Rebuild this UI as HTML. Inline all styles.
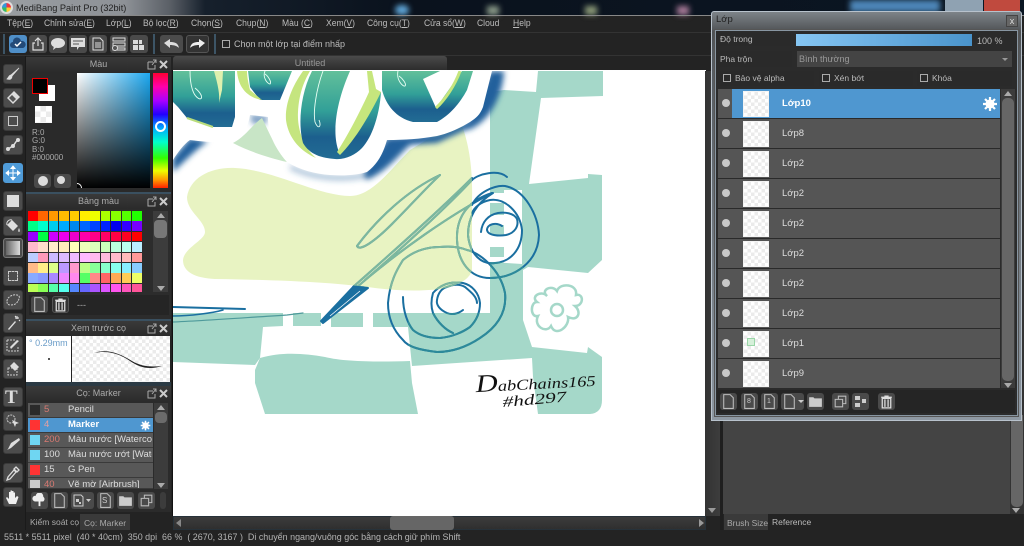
<!DOCTYPE html>
<html><head><meta charset="utf-8"><title>MediBang Paint Pro</title>
<style>
*{box-sizing:border-box}
html,body{margin:0;padding:0;width:1024px;height:546px;overflow:hidden;background:#222}
#r{position:relative;width:1024px;height:546px;overflow:hidden;background:#232323;font-family:"Liberation Sans","DejaVu Sans","Noto Sans CJK SC",sans-serif;font-size:9px;color:#c4c4c4;filter:blur(.35px)}
#r div,#r span.a,#r svg.a{position:absolute}
.t{white-space:nowrap;line-height:12px}
.m{top:18px;font-size:9.5px;color:#bdbdbd;white-space:nowrap;line-height:12px;position:absolute;transform:scaleX(.9);transform-origin:0 0}
.b{background:#4a4a4a;border-radius:3px}
.h{background:linear-gradient(#3a3a3a,#2b2b2b);height:15px;text-align:center;line-height:15px;color:#aaa;font-size:9px}
.tb{width:20px;height:20px;left:3px;background:#4c4c4c;border-radius:3px;border:1px solid #3a3a3a}
.ck{background-color:#fff;background-image:conic-gradient(#ebebeb 25%,#fff 25% 50%,#ebebeb 50% 75%,#fff 75%);background-size:7px 7px}
.lr{left:718px;width:282px;height:29px;background:#555}
.lr b{position:absolute;left:64px;top:9px;font-weight:normal;font-size:9.5px;color:#ddd;line-height:12px}
.ey{position:absolute;left:4px;top:10px;width:8px;height:8px;border-radius:50%;background:#c8c8c8}
.th{position:absolute;left:25px;top:2px;width:26px;height:26px;border:1px solid #f4f4f4}
.br{left:28px;width:125px;height:15px;background:#585858;border-bottom:1px solid #3a3a3a}
.br s{position:absolute;left:2px;top:2px;width:10px;height:10px;text-decoration:none}
.br i{position:absolute;left:16px;top:1px;font-style:normal;font-size:9.5px;color:#d97a72;line-height:12px}
.br b{position:absolute;left:40px;top:1px;font-weight:normal;font-size:9.5px;color:#ddd;line-height:12px;white-space:nowrap;overflow:hidden;width:84px}
.pal{left:28px;top:211px;width:116px;height:81px;display:flex;flex-wrap:wrap;align-content:flex-start;overflow:hidden}
.pal i{display:block;width:9.6px;height:9.6px;margin:0 .8px .8px 0}
.lab{background:#2a2a2a;color:#bbb;font-size:8.5px;line-height:13px;padding-left:0;white-space:nowrap}
.cb{position:absolute;width:8px;height:8px;border:1px solid #aaa;left:3px;top:3px}
</style></head><body><div id="r">
<svg width="0" height="0" style="position:absolute"><defs>
<symbol id="doc" viewBox="0 0 16 16"><path d="M3.500 1.500h6l3 3v10h-9z" fill="none" stroke="#bbb" stroke-width="1"/></symbol>
<symbol id="fold" viewBox="0 0 16 16"><path d="M2 4h4l1 1h7v8H2z" fill="#ccc"/></symbol>
<symbol id="copy" viewBox="0 0 16 16"><path d="M3 6h7v7H3zM6 6V3h7v7h-3" fill="none" stroke="#bbb"/></symbol>
<symbol id="tr" viewBox="0 0 16 16"><path d="M3 4h10M6 3h4M4 5h8v9H4zM6.500 6v7M9.500 6v7" fill="none" stroke="#ddd" stroke-width="1.200"/></symbol>
<symbol id="gear" viewBox="0 0 16 16"><circle cx="8" cy="8" r="4.500" fill="#fff"/><circle cx="8" cy="8" r="1.800" fill="#4f97d0"/><path d="M8 1v14M1 8h14M3 3l10 10M13 3L3 13" stroke="#fff" stroke-width="2.200"/></symbol>
<linearGradient id="lf" x1="0" y1="0" x2="0" y2="1"><stop offset="0" stop-color="#62c09a"/><stop offset=".45" stop-color="#32a098"/><stop offset=".75" stop-color="#1c5f8e"/><stop offset="1" stop-color="#226c94"/></linearGradient>
<filter id="bl" x="-40%" y="-40%" width="180%" height="180%"><feGaussianBlur stdDeviation="3"/></filter>
<clipPath id="cb"><path d="M187 197C190 178 210 167 235 168C275 170 315 195 350 196C372 196 390 170 410 150L460 120C468 140 473 165 472 200L472 270C470 278 462 283 450 287C430 292 400 291 375 288C340 283 290 280 215 279C195 278 183 272 183 260C184 248 205 240 205 232C205 220 187 212 187 197Z"/></clipPath>
<clipPath id="cm"><rect x="408" y="313" width="120" height="50"/><rect x="490" y="262" width="33" height="51"/></clipPath>
<g id="sc" fill="none" stroke-linecap="round" stroke-linejoin="round" stroke-width="2">
<path d="M440 175C408 190 378 218 357 246C360 252 376 240 392 224C410 206 426 188 440 175Z"/>
<path d="M472 178C440 210 395 250 353 287M472 180C448 206 400 250 365 280M492 193C450 215 400 250 357 287"/>
<path d="M354 286L368 288L323 323L321 321Z" fill="currentColor"/>
<path d="M472 180C478 174 498 169 507 177"/>
<path d="M472 205C478 192 495 185 505 186C525 190 538 215 539 235C538 262 515 278 490 278C470 278 458 262 457 240C456 215 470 200 492 193"/>
<path d="M493 193C478 202 468 215 468 235C470 255 482 265 495 263C510 262 522 250 522 230C520 212 505 198 490 200C480 202 474 208 472 213"/>
<path d="M502 226C496 222 487 224 487 230C488 236 500 236 506 235C515 233 519 226 517 219C514 213 505 212 498 213C488 215 482 222 481 232"/>
<path d="M467 250C478 252 500 268 505 293C507 312 497 327 480 338C465 348 450 352 437 352C420 350 408 347 403 340C393 330 388 318 388 303C390 280 398 268 403 260C415 250 428 247 440 247C450 246 460 247 467 250"/>
<path d="M403 297C403 312 408 324 413 330C420 336 430 338 440 338C452 337 463 332 470 327C477 320 480 312 480 303C479 293 472 285 463 283C450 281 440 285 433 293C431 300 431 307 433 313C438 323 446 330 453 333"/>
<path d="M463 310C458 314 452 315 447 313C440 310 436 305 437 300C438 293 442 288 447 287C454 284 460 284 465 287C471 292 477 297 477 303"/>
</g>
</defs></svg>

<!-- title bar -->
<div style="left:0;top:0;width:1024px;height:16px;background:linear-gradient(90deg,#9a9ea2 0,#8d9196 125px,#5a5f66 170px,#16202c 205px,#0a121d 400px,#0b1420 700px,#0a1622 1024px)"></div>
<div style="left:395px;top:5px;width:14px;height:10px;background:#5fa6d8;border-radius:5px;filter:blur(3px)"></div>
<div style="left:487px;top:6px;width:12px;height:9px;background:#8a9a88;filter:blur(3px)"></div>
<div style="left:585px;top:6px;width:12px;height:9px;background:#8c9a78;filter:blur(3px)"></div>
<div style="left:677px;top:6px;width:12px;height:9px;background:#a87a98;filter:blur(3px)"></div>
<div style="left:850px;top:0;width:90px;height:12px;background:#4d86b8;filter:blur(3px)"></div>
<div style="left:945px;top:0;width:38px;height:12px;background:#8fa2b2"></div>
<div style="left:984px;top:0;width:36px;height:12px;background:#c04a3e"></div>
<div style="left:0;top:1px;width:13px;height:13px;background:conic-gradient(#e34 0 25%,#fc3 0 50%,#3b6 0 75%,#39d 0);border-radius:50%;border:2px solid #ddd"></div>
<div class="t" style="left:16px;top:2px;font-size:9.2px;color:#222">MediBang Paint Pro (32bit)</div>
<div style="left:0;top:15px;width:1024px;height:1px;background:#888"></div>

<!-- menu -->
<span class="m" style="left:7px">Tệp(<u>E</u>)</span>
<span class="m" style="left:44px">Chỉnh sửa(<u>E</u>)</span>
<span class="m" style="left:106px">Lớp(<u>L</u>)</span>
<span class="m" style="left:143px">Bộ lọc(<u>R</u>)</span>
<span class="m" style="left:191px">Chọn(<u>S</u>)</span>
<span class="m" style="left:236px">Chụp(<u>N</u>)</span>
<span class="m" style="left:282px">Màu (<u>C</u>)</span>
<span class="m" style="left:326px">Xem(<u>V</u>)</span>
<span class="m" style="left:367px">Công cụ(<u>T</u>)</span>
<span class="m" style="left:424px">Cửa sổ(<u>W</u>)</span>
<span class="m" style="left:477px">Cloud</span>
<span class="m" style="left:513px"><u>H</u>elp</span>
<div style="left:0;top:32px;width:1024px;height:1px;background:#333"></div>

<!-- toolbar -->
<div style="left:3px;top:34px;width:2px;height:20px;background:#3d5566"></div>
<div class="b" style="left:9px;top:35px;width:18px;height:18px;background:#4f8fc8"></div>
<svg class="a" style="left:10px;top:37px" width="16" height="14" viewBox="0 0 16 14"><path d="M3 11a3 3 0 0 1 0-6 4 4 0 0 1 8-1 3.500 3.500 0 0 1 2 7z" fill="#234a78"/><path d="M5 7l2 2 4-4" stroke="#fff" fill="none" stroke-width="1.500"/></svg>
<div class="b" style="left:29px;top:35px;width:18px;height:18px"></div>
<svg class="a" style="left:30px;top:36px" width="16" height="16" viewBox="0 0 16 16"><path d="M5 7H3v7h10V7h-2M8 10V2M5 5l3-3 3 3" fill="none" stroke="#ddd" stroke-width="1.200"/></svg>
<div class="b" style="left:49px;top:35px;width:18px;height:18px"></div>
<svg class="a" style="left:50px;top:37px" width="16" height="14" viewBox="0 0 16 14"><ellipse cx="8" cy="6" rx="7" ry="5" fill="#ddd"/><path d="M4 9l-1 4 4-3z" fill="#ddd"/></svg>
<div class="b" style="left:69px;top:35px;width:18px;height:18px"></div>
<svg class="a" style="left:70px;top:37px" width="16" height="14" viewBox="0 0 16 14"><path d="M1 1h14v9H9l-2 3v-3H1z" fill="#ddd"/><path d="M3 4h10M3 7h6" stroke="#555"/></svg>
<div class="b" style="left:89px;top:35px;width:18px;height:18px"></div>
<svg class="a" style="left:90px;top:36px" width="16" height="16" viewBox="0 0 16 16"><path d="M3 2h7l3 3v9H3z" fill="none" stroke="#ddd"/><path d="M5 7h6M5 9h6M5 11h6" stroke="#ddd"/></svg>
<div class="b" style="left:110px;top:35px;width:18px;height:18px"></div>
<svg class="a" style="left:111px;top:36px" width="16" height="16" viewBox="0 0 16 16"><path d="M2 2h12v3H2zM2 7h12v3H2zM2 12h12v2H2z" fill="none" stroke="#ddd"/><circle cx="4" cy="12" r="2.500" fill="#555" stroke="#ddd"/></svg>
<div class="b" style="left:130px;top:35px;width:18px;height:18px"></div>
<svg class="a" style="left:131px;top:36px" width="16" height="16" viewBox="0 0 16 16"><path d="M2 4h5v4H2zM8 4h3v4H8zM2 9h5v5H2zM8 9h5v5H8z" fill="#ddd"/></svg>
<div style="left:153px;top:34px;width:2px;height:20px;background:#3d5566"></div>
<div class="b" style="left:160px;top:35px;width:23px;height:18px;background:#4b4b4b"></div>
<svg class="a" style="left:162px;top:37px" width="19" height="14" viewBox="0 0 19 14"><path d="M2 6l6-4v3c5 0 8 1 9 6-2-2-5-3-9-3v3z" fill="#ddd"/></svg>
<div class="b" style="left:186px;top:35px;width:23px;height:18px;background:#333;border:1px solid #555"></div>
<svg class="a" style="left:188px;top:37px" width="19" height="14" viewBox="0 0 19 14"><path d="M17 6l-6-4v3C6 5 3 6 2 11c2-2 5-3 9-3v3z" fill="#eee"/></svg>
<div style="left:214px;top:34px;width:2px;height:20px;background:#3d5566"></div>
<div style="left:222px;top:40px;width:8px;height:8px;border:1px solid #aaa"></div>
<div class="t" style="left:234px;top:38px;color:#bbb;font-size:9px">Chọn một lớp tại điểm nhấp</div>
<div style="left:0;top:55px;width:1024px;height:1px;background:#333"></div>

<!-- left tools -->
<div style="left:25px;top:56px;width:1px;height:474px;background:#1a1a1a"></div>
<div class="tb" style="top:64px"></div><svg class="a" style="left:5px;top:66px" width="16" height="16" viewBox="0 0 16 16"><path d="M14 2L6 9l1 1zM6 9c-2 0-2 2-4 4 3 1 5 0 5-3z" fill="#ddd" stroke="#ddd" stroke-width=".8"/></svg>
<div class="tb" style="top:88px"></div><svg class="a" style="left:5px;top:90px" width="16" height="16" viewBox="0 0 16 16"><path d="M9 1l6 6-7 7-6-6z" fill="#ddd"/><path d="M7 5l4 4-3 3-4-4z" fill="#555"/></svg>
<div class="tb" style="top:111px"></div><div style="left:8px;top:116px;width:10px;height:10px;border:1.500px solid #ccc"></div>
<div class="tb" style="top:135px"></div><svg class="a" style="left:5px;top:137px" width="16" height="16" viewBox="0 0 16 16"><path d="M3 12l5-3 5-7" stroke="#ddd" fill="none" stroke-width="1.500"/><circle cx="3" cy="12" r="2" fill="#ddd"/><circle cx="8" cy="9" r="2" fill="#ddd"/><circle cx="13" cy="3" r="2" fill="#ddd"/></svg>
<div class="tb" style="top:163px;background:#4f9bd8;border-color:#4f9bd8"></div><svg class="a" style="left:5px;top:165px" width="16" height="16" viewBox="0 0 16 16"><path d="M8 1v14M1 8h14M8 1L6 3.500h4zM8 15l-2-2.500h4zM1 8l2.500-2v4zM15 8l-2.500-2v4z" stroke="#fff" fill="#fff"/></svg>
<div class="tb" style="top:191px"></div><div style="left:7px;top:195px;width:12px;height:12px;background:#ddd"></div>
<div class="tb" style="top:216px"></div><svg class="a" style="left:5px;top:218px" width="16" height="16" viewBox="0 0 16 16"><path d="M2 7l5-5 6 6-5 5z" fill="#ddd"/><path d="M2 7C1 4 4 1 7 2" stroke="#ddd" fill="none"/><path d="M14 10c1 2 1 4 0 4s-1-2 0-4z" fill="#ddd"/></svg>
<div class="tb" style="top:238px;border-color:#777"></div><div style="left:6px;top:241px;width:14px;height:14px;background:linear-gradient(90deg,#666,#ddd)"></div>
<div class="tb" style="top:266px"></div><div style="left:8px;top:271px;width:10px;height:10px;border:1px dashed #ccc"></div>
<div class="tb" style="top:290px"></div><svg class="a" style="left:5px;top:292px" width="16" height="16" viewBox="0 0 16 16"><path d="M2 9c0-4 6-7 10-6s2 4 1 6-3 4-7 4-4-2-4-4z" fill="none" stroke="#ccc" stroke-dasharray="2 1"/></svg>
<div class="tb" style="top:313px"></div><svg class="a" style="left:5px;top:315px" width="16" height="16" viewBox="0 0 16 16"><path d="M3 14L10 6l1 1-7 8z" fill="#ddd"/><path d="M12 1v3M10 3h4M14 5l1 1M10 1l1 1" stroke="#eee"/></svg>
<div class="tb" style="top:336px"></div><svg class="a" style="left:5px;top:338px" width="16" height="16" viewBox="0 0 16 16"><path d="M2 2h8M2 2v11h11V8" stroke="#ccc" fill="none" stroke-dasharray="2 1"/><path d="M6 11l8-8-2-1-7 7z" fill="#ddd"/></svg>
<div class="tb" style="top:359px"></div><svg class="a" style="left:5px;top:361px" width="16" height="16" viewBox="0 0 16 16"><path d="M3 7h9v7H3z" fill="none" stroke="#ccc" stroke-dasharray="2 1"/><path d="M9 1l5 5-4 4-5-5z" fill="#ddd"/></svg>
<div class="tb" style="top:387px"></div><div class="t" style="left:5px;top:389px;font:bold 19px/18px 'Liberation Serif',serif;color:#ddd">T</div>
<div class="tb" style="top:411px"></div><svg class="a" style="left:5px;top:413px" width="16" height="16" viewBox="0 0 16 16"><circle cx="6" cy="6" r="4" fill="none" stroke="#ccc" stroke-dasharray="2 1"/><path d="M7 7l7 3-3 1-1 3z" fill="#ddd"/></svg>
<div class="tb" style="top:434px"></div><svg class="a" style="left:5px;top:436px" width="16" height="16" viewBox="0 0 16 16"><path d="M14 2L6 7 3 13l-1 1 4-2 9-8z" fill="#ddd"/></svg>
<div class="tb" style="top:463px"></div><svg class="a" style="left:5px;top:465px" width="16" height="16" viewBox="0 0 16 16"><path d="M11 2l3 3-2 2-3-3zM9 5l2 2-6 7-3 1 1-3z" fill="none" stroke="#ddd" stroke-width="1.300"/></svg>
<div class="tb" style="top:487px"></div><svg class="a" style="left:4px;top:488px" width="18" height="18" viewBox="0 0 18 18"><path d="M5 16L2 10l1-1 2 2V4h1.500v5V2.500H8V9V3h1.500v6V4.500H11V10l2-2 1.500 1L12 16z" fill="#eee"/></svg>

<!-- colour panel -->
<div style="left:26px;top:57px;width:145px;height:136px;background:#2a2a2a"></div>
<div class="h" style="left:26px;top:57px;width:145px">Màu</div>
<svg class="a" style="left:146px;top:59px" width="24" height="11" viewBox="0 0 24 11"><path d="M2 3h5M2 3v7h7V6M6 6l4-5M7 1h3v3" stroke="#aaa" fill="none"/><path d="M14 2l7 7M21 2l-7 7" stroke="#ccc" stroke-width="2"/></svg>
<div style="left:39px;top:85px;width:16px;height:16px;background:#fff"></div>
<div style="left:32px;top:78px;width:16px;height:16px;background:#000;border:1.500px solid #e00"></div>
<div class="ck" style="left:35px;top:106px;width:17px;height:17px;background-size:11px 11px"></div>
<div class="t" style="left:32px;top:129px;font-size:8px;line-height:8.300px;color:#aaa;white-space:pre">R:0
G:0
B:0
#000000</div>
<div class="b" style="left:34px;top:174px;width:17px;height:14px"></div>
<div style="left:38px;top:176px;width:10px;height:10px;background:#ddd;border-radius:50%"></div>
<div class="b" style="left:54px;top:174px;width:17px;height:14px"></div>
<div style="left:57px;top:176px;width:8px;height:8px;background:#ddd;border-radius:50%"></div>
<div style="left:77px;top:73px;width:73px;height:115px;background:linear-gradient(transparent,#000),linear-gradient(90deg,#fff,#1ca8f0)"></div>
<div style="left:153px;top:73px;width:15px;height:115px;background:linear-gradient(#ff0033 0,#ff00aa 12%,#aa00ff 24%,#2200ff 36%,#00aaff 48%,#00ffcc 60%,#33ff00 74%,#eeff00 85%,#ff9900 93%,#ff2200 100%)"></div>
<div style="left:155px;top:121px;width:11px;height:11px;border-radius:50%;border:2px solid #fff;background:transparent"></div>
<div style="left:77px;top:183px;width:5px;height:5px;border-top:1.500px solid #fff;border-right:1.500px solid #fff;border-radius:0 5px 0 0"></div>
<div style="left:26px;top:192px;width:145px;height:2px;background:#3a5060"></div>

<!-- palette -->
<div style="left:26px;top:194px;width:145px;height:125px;background:#2c2c2c"></div>
<div class="h" style="left:26px;top:194px;width:145px">Bảng màu</div>
<svg class="a" style="left:146px;top:196px" width="24" height="11" viewBox="0 0 24 11"><path d="M2 3h5M2 3v7h7V6M6 6l4-5M7 1h3v3" stroke="#aaa" fill="none"/><path d="M14 2l7 7M21 2l-7 7" stroke="#ccc" stroke-width="2"/></svg>
<div class="pal">
<i style="background:#f00"></i><i style="background:#f60"></i><i style="background:#f90"></i><i style="background:#fb0"></i><i style="background:#fc0"></i><i style="background:#fe0"></i><i style="background:#ef0"></i><i style="background:#af0"></i><i style="background:#8f0"></i><i style="background:#5f0"></i><i style="background:#2f0"></i>
<i style="background:#0f8"></i><i style="background:#0fc"></i><i style="background:#0ce"></i><i style="background:#0af"></i><i style="background:#08e"></i><i style="background:#06f"></i><i style="background:#04f"></i><i style="background:#02f"></i><i style="background:#00e"></i><i style="background:#30f"></i><i style="background:#70f"></i>
<i style="background:#90f"></i><i style="background:#0f4"></i><i style="background:#c0f"></i><i style="background:#e0e"></i><i style="background:#e0c"></i><i style="background:#f0a"></i><i style="background:#f08"></i><i style="background:#f06"></i><i style="background:#f04"></i><i style="background:#f02"></i><i style="background:#f00"></i>
<i style="background:#fbc"></i><i style="background:#fdc"></i><i style="background:#fec"></i><i style="background:#feb"></i><i style="background:#ffb"></i><i style="background:#efb"></i><i style="background:#dfb"></i><i style="background:#cfb"></i><i style="background:#bfd"></i><i style="background:#bfe"></i><i style="background:#bef"></i>
<i style="background:#bcf"></i><i style="background:#f9b"></i><i style="background:#cbf"></i><i style="background:#dbf"></i><i style="background:#ebf"></i><i style="background:#fbf"></i><i style="background:#fbe"></i><i style="background:#fbd"></i><i style="background:#fbc"></i><i style="background:#fbb"></i><i style="background:#f99"></i>
<i style="background:#fb8"></i><i style="background:#fe8"></i><i style="background:#df8"></i><i style="background:#b9f"></i><i style="background:#f9c"></i><i style="background:#bf8"></i><i style="background:#8f9"></i><i style="background:#8fc"></i><i style="background:#8fe"></i><i style="background:#8ef"></i><i style="background:#8cf"></i>
<i style="background:#8af"></i><i style="background:#89f"></i><i style="background:#a8f"></i><i style="background:#e8f"></i><i style="background:#f8e"></i><i style="background:#5f6"></i><i style="background:#f88"></i><i style="background:#f66"></i><i style="background:#fa5"></i><i style="background:#fc5"></i><i style="background:#ef6"></i>
<i style="background:#bf5"></i><i style="background:#8f5"></i><i style="background:#5fa"></i><i style="background:#5fe"></i><i style="background:#58f"></i><i style="background:#66f"></i><i style="background:#a5f"></i><i style="background:#d5f"></i><i style="background:#f5e"></i><i style="background:#f5b"></i><i style="background:#f59"></i>
</div>
<div style="left:153px;top:211px;width:15px;height:81px;background:#3c3c3c"></div>
<div style="left:154px;top:220px;width:13px;height:18px;background:#777;border-radius:4px"></div>
<div style="left:157px;top:213px;width:0;height:0;border:4px solid transparent;border-bottom:5px solid #aaa;border-top:0"></div>
<div style="left:157px;top:286px;width:0;height:0;border:4px solid transparent;border-top:5px solid #aaa;border-bottom:0"></div>
<div style="left:29px;top:295px;width:140px;height:20px;background:#252525"></div>
<div class="b" style="left:31px;top:296px;width:17px;height:17px"></div><svg class="a" style="left:31px;top:296px" width="17" height="17"><use href="#doc"/></svg>
<div class="b" style="left:52px;top:296px;width:17px;height:17px;background:#333;border:1px solid #555"></div><svg class="a" style="left:52px;top:296px" width="17" height="17"><use href="#tr"/></svg>
<div class="t" style="left:77px;top:299px;color:#aaa">---</div>
<div style="left:26px;top:319px;width:145px;height:2px;background:#3a5060"></div>

<!-- brush preview -->
<div class="h" style="left:26px;top:321px;width:145px">Xem trước cọ</div>
<svg class="a" style="left:146px;top:323px" width="24" height="11" viewBox="0 0 24 11"><path d="M2 3h5M2 3v7h7V6M6 6l4-5M7 1h3v3" stroke="#aaa" fill="none"/><path d="M14 2l7 7M21 2l-7 7" stroke="#ccc" stroke-width="2"/></svg>
<div style="left:26px;top:336px;width:45px;height:46px;background:#fff"></div>
<div class="t" style="left:29px;top:337px;color:#6a9cc8;font-size:9px">° 0.29mm</div>
<div style="left:48px;top:358px;width:2px;height:2px;background:#555"></div>
<div class="ck" style="left:72px;top:336px;width:98px;height:46px"></div>
<svg class="a" style="left:72px;top:336px" width="98" height="46" viewBox="0 0 98 46"><path d="M22 17c15-5 28 2 38 8s20 6 30 5c-12 4-22 2-32-5S36 14 22 17z" fill="#222"/></svg>
<div style="left:26px;top:382px;width:145px;height:4px;background:#2b3a44"></div>

<!-- brush panel -->
<div class="h" style="left:26px;top:386px;width:145px;height:16px">Cọ: Marker</div>
<svg class="a" style="left:146px;top:388px" width="24" height="11" viewBox="0 0 24 11"><path d="M2 3h5M2 3v7h7V6M6 6l4-5M7 1h3v3" stroke="#aaa" fill="none"/><path d="M14 2l7 7M21 2l-7 7" stroke="#ccc" stroke-width="2"/></svg>
<div style="left:26px;top:402px;width:145px;height:110px;background:#2b2b2b"></div>
<div class="br" style="top:403px"><s style="background:#2a2a2a"></s><i>5</i><b>Pencil</b></div>
<div class="br" style="top:418px;background:#4f97d0"><s style="background:#f33"></s><i style="color:#e8a0a0">4</i><b style="color:#fff;font-weight:bold">Marker</b></div>
<svg class="a" style="left:140px;top:420px" width="11" height="11"><use href="#gear"/></svg>
<div class="br" style="top:433px"><s style="background:#6fd6f2"></s><i>200</i><b>Màu nước [Watercol</b></div>
<div class="br" style="top:448px"><s style="background:#6fd6f2"></s><i style="color:#ddd">100</i><b>Màu nước ướt [Wate</b></div>
<div class="br" style="top:463px"><s style="background:#f33"></s><i style="color:#ddd">15</i><b>G Pen</b></div>
<div class="br" style="top:478px;height:11px;overflow:hidden"><s style="background:#ccc;height:11px"></s><i>40</i><b>Vẽ mờ [Airbrush]</b></div>
<div style="left:154px;top:403px;width:14px;height:86px;background:#3c3c3c"></div>
<div style="left:155px;top:412px;width:12px;height:11px;background:#6b6b6b;border-radius:4px"></div>
<div style="left:157px;top:405px;width:0;height:0;border:4px solid transparent;border-bottom:5px solid #aaa;border-top:0"></div>
<div style="left:157px;top:483px;width:0;height:0;border:4px solid transparent;border-top:5px solid #aaa;border-bottom:0"></div>
<div class="b" style="left:31px;top:492px;width:17px;height:17px"></div><svg class="a" style="left:32px;top:493px" width="15" height="15" viewBox="0 0 16 16"><path d="M3 9a3 3 0 0 1 1-6 4 4 0 0 1 8 1 3 3 0 0 1 0 5H9v5H7V9z" fill="#eee"/></svg>
<div class="b" style="left:51px;top:492px;width:17px;height:17px"></div><svg class="a" style="left:51px;top:492px" width="17" height="17"><use href="#doc"/></svg>
<div class="b" style="left:71px;top:492px;width:23px;height:17px"></div><svg class="a" style="left:72px;top:493px" width="21" height="15" viewBox="0 0 21 15"><path d="M2 2h7l2 2v9H2z" fill="none" stroke="#ccc"/><path d="M4 6h3v3H4zM7 9h2v2H7z" fill="#ccc"/><path d="M14 6h5l-2.500 3z" fill="#ccc"/></svg>
<div class="b" style="left:97px;top:492px;width:17px;height:17px"></div><svg class="a" style="left:97px;top:492px" width="17" height="17"><use href="#doc"/></svg><div class="t" style="left:102px;top:495px;font-size:8px;color:#ccc">S</div>
<div class="b" style="left:117px;top:492px;width:17px;height:17px"></div><svg class="a" style="left:117px;top:492px" width="17" height="17"><use href="#fold"/></svg>
<div class="b" style="left:138px;top:492px;width:17px;height:17px"></div><svg class="a" style="left:138px;top:492px" width="17" height="17"><use href="#copy"/></svg>
<div class="b" style="left:160px;top:492px;width:6px;height:17px;background:#3c3c3c"></div>
<div class="t" style="left:30px;top:516px;color:#aaa;font-size:8.500px">Kiểm soát cọ</div>
<div style="left:80px;top:514px;width:50px;height:16px;background:#3a3a3a"></div>
<div class="t" style="left:84px;top:517px;color:#aaa;font-size:8.500px">Cọ: Marker</div>

<!-- canvas tab -->
<div style="left:173px;top:56px;width:274px;height:14px;background:linear-gradient(#4a4a4a,#2d2d2d);border-radius:3px 3px 0 0;text-align:center;line-height:14px;color:#999;font-size:9px">Untitled</div>

<!-- canvas -->
<div style="left:172px;top:70px;width:534px;height:446px;background:#fff;overflow:hidden;border-left:1px solid #111"></div>
<svg class="a" style="left:173px;top:71px" width="532" height="445" viewBox="173 71 532 445">
<!-- pale blob -->
<path d="M187 197C190 178 210 167 235 168C275 170 315 195 350 196C372 196 390 170 410 150L460 120C468 140 473 165 472 200L472 270C470 278 462 283 450 287C430 292 400 291 375 288C340 283 290 280 215 279C195 278 183 272 183 260C184 248 205 240 205 232C205 220 187 212 187 197Z" fill="#e8f3c2"/>
<!-- mint -->
<g fill="#a5d8c9">
<path d="M490 92L504 90L536 92L538 71L603 71L603 96L541 98L529 184L588 178L588 174L602 175L602 260L588 273L528 267L522 264L522 190L504 190L504 193L490 193Z"/>
<rect x="490" y="203" width="14" height="12"/><rect x="490" y="225" width="14" height="10"/><rect x="490" y="247" width="14" height="10"/>
<path d="M490 262L522 264L528 267L523 270L523 320L532 347L587 353L588 347L602 357L602 400Q602 413 590 414L538 414L533 377L532 358L412 366L408 327L400 327L400 313L490 313Z"/>
<path d="M173 313L283 313L283 326L263 327L260 358L255 365L173 362Z"/>
<path d="M255 370L260 358C280 352 303 353 325 357C345 362 380 362 410 361L412 383L418 414L265 414L255 383Z"/>
<rect x="293" y="313" width="28" height="13"/><rect x="331" y="313" width="32" height="14"/><rect x="373" y="313" width="27" height="14"/>
</g>
<!-- flower -->
<g fill="none" stroke="#a5d8c9" stroke-width="2.500"><path d="M547 296C540 290 552 284 557 291C560 282 578 284 576 295C584 293 584 306 575 306C582 312 578 322 568 317C570 326 556 338 551 326C546 334 533 326 538 316C530 318 530 302 537 302C530 296 542 290 547 296Z"/><circle cx="557" cy="310" r="6"/></g>
<!-- sticker shadow patches -->
<g fill="#24609c" filter="url(#bl)">
<path d="M173 158L190 138L208 141C195 150 182 164 173 172Z"/>
<path d="M364 172L387 138L418 138C402 150 388 172 366 180Z"/>
<path d="M387 138L437 134L470 120L470 128L437 143L395 146Z"/>
<path d="M468 122L490 71L504 71C503 95 490 122 468 130Z"/>
<path d="M250 114L268 116L266 124L252 124Z" opacity=".6"/>
<path d="M290 164C310 175 345 178 367 172L367 178C340 184 310 180 290 170Z" opacity=".35"/>
</g>
<path d="M233 143C245 137 252 125 262 118C268 130 276 150 287 162C270 158 250 152 233 143Z" fill="#c8e5c6"/>
<path d="M173 71L173 160C178 152 184 144 190 140C205 142 220 143 233 142C242 138 248 128 250 115L268 117C268 130 272 145 287 162C300 170 315 174 330 175C345 176 358 175 367 172C380 162 384 150 387 140C405 140 420 139 437 136C450 133 460 128 470 122C476 118 480 115 483 107L492 71Z" fill="#fff"/>
<!-- leaves -->
<path d="M173 71H235V117L232 127H213L187 118L178 107L173 102Z" fill="url(#lf)"/>
<path d="M187 118L213 127" stroke="#b9dd7c" stroke-width="2" fill="none"/>
<path d="M214 71C218 85 220 95 219 103L222 90L223 71Z" fill="#dff0ae"/>
<path d="M235 71H237V120H235Z" fill="#fff"/>
<path d="M248 71H292L280 100H260L250 87Z" fill="url(#lf)"/>
<path d="M237 71C238 85 245 97 262 100L250 90C248 82 247 76 247 71Z" fill="#c6e67d"/>
<path d="M303 71C291 88 285 105 286 120C288 136 298 150 316 158C304 148 297 130 298 112C299 95 303 83 310 71Z" fill="#c5e57f"/>
<path d="M312 71C300 95 298 125 303 143C310 155 322 158 335 159C345 160 355 155 362 148C374 135 380 110 381 92L376 92L339 152C332 135 335 105 350 71Z" fill="url(#lf)"/>
<path d="M337 152L340 155C355 140 370 115 381 92L376 89L372 71L367 71L369 92C360 112 348 135 337 152Z" fill="#c6e67d"/>
<path d="M382 71L382 90C386 105 396 118 413 122L437 122C450 115 460 103 467 90L473 71Z" fill="url(#lf)"/>
<path d="M423 79L436 108L462 71H440Z" fill="#fff"/>
<path d="M436 108C445 100 455 85 460 71" stroke="#c6e67d" stroke-width="3" fill="none"/>
<g fill="none" stroke="#e8fff4" stroke-width=".9"><path d="M190 71C190 85 193 97 200 99C204 98 200 92 195 88"/><path d="M265 71C262 78 268 84 270 84C272 82 268 76 265 74"/><path d="M323 71C316 90 313 112 315 122C318 130 322 127 319 120"/><path d="M398 71C396 80 403 87 405 86C407 84 402 78 399 76"/></g>
<!-- scribbles -->
<use href="#sc" style="color:#1a6fa0;stroke:#1a6fa0"/>
<g clip-path="url(#cm)"><use href="#sc" style="color:#2d8a9a;stroke:#2d8a9a"/></g>
<g clip-path="url(#cb)"><use href="#sc" style="color:#7db89e;stroke:#7db89e"/></g>
<path d="M360 291L330 316" stroke="#fff" stroke-width=".8"/>
<g fill="none" stroke-linecap="round">
<path d="M173 307L245 309" stroke="#1a6fa0" stroke-width="2"/>
<path d="M173 316C190 316 213 313 223 310" stroke="#1a6fa0" stroke-width="1.500"/>
<path d="M173 322C200 321 240 318 287 315L303 313" stroke="#4e9a9b" stroke-width="1.200"/>
</g>
<!-- signature -->
<g font-family="Liberation Serif,serif" font-style="italic" fill="#111">
<text transform="rotate(-3 478 392)" x="476" y="392" font-size="15" textLength="120" lengthAdjust="spacingAndGlyphs"><tspan font-size="25">D</tspan>abChains165</text>
<text transform="rotate(-5 503 407)" x="503" y="407" font-size="15" textLength="64" lengthAdjust="spacingAndGlyphs">#hd297</text>
</g>
</svg>

<!-- canvas scrollbars -->
<div style="left:173px;top:516px;width:533px;height:14px;background:linear-gradient(#3c3c3c,#2f2f2f);border:1px solid #27323a"></div>
<div style="left:390px;top:516px;width:64px;height:14px;background:#666;border-radius:3px"></div>
<div style="left:176px;top:519px;width:0;height:0;border:4px solid transparent;border-right:5px solid #888;border-left:0"></div>
<div style="left:699px;top:519px;width:0;height:0;border:4px solid transparent;border-left:5px solid #999;border-right:0"></div>
<div style="left:705px;top:71px;width:15px;height:445px;background:linear-gradient(90deg,#333,#3d3d3d)"></div>
<div style="left:708px;top:508px;width:0;height:0;border:4px solid transparent;border-top:5px solid #999;border-bottom:0"></div>
<div style="left:720px;top:56px;width:3px;height:474px;background:#1f1f1f"></div>

<!-- right lower -->
<div style="left:723px;top:70px;width:287px;height:444px;background:#444"></div>
<div style="left:1010px;top:70px;width:14px;height:444px;background:#333"></div>
<div style="left:1011px;top:415px;width:12px;height:92px;background:#666;border-radius:0 0 5px 5px"></div>
<div style="left:1012px;top:508px;width:0;height:0;border:4px solid transparent;border-top:5px solid #aaa;border-bottom:0"></div>
<div style="left:723px;top:514px;width:301px;height:32px;background:#232323"></div>
<div style="left:724px;top:514px;width:44px;height:16px;background:#3a3a3a"></div>
<div class="t" style="left:727px;top:517px;color:#aaa;font-size:8.500px">Brush Size</div>
<div class="t" style="left:772px;top:516px;color:#bbb;font-size:8.500px">Reference</div>

<!-- layer window -->
<div style="left:711px;top:11px;width:311px;height:410px;background:linear-gradient(#7d8388 0,#4e5154 20px,#555a5f 40px,#8e98a2 100%);border:1px solid #b8c2cc;border-radius:3px 3px 0 0"></div>
<div class="t" style="left:716px;top:14px;font-size:9.500px;color:#222">Lớp</div>
<div style="left:1006px;top:15px;width:12px;height:12px;background:#666;border:1px solid #444;text-align:center;line-height:10px;font-size:9px;color:#ddd">x</div>
<div style="left:715px;top:30px;width:303px;height:386px;background:#2b2b2b;border:1px solid #8896a2;box-shadow:0 0 0 1px #555"></div>
<div class="lab" style="left:720px;top:33px;width:71px;height:13px">Độ trong</div>
<div style="left:796px;top:34px;width:176px;height:12px;background:linear-gradient(90deg,#86c6f3,#4a94cc)"></div>
<div class="t" style="left:977px;top:35px;color:#bbb;font-size:9px">100 %</div>
<div class="lab" style="left:720px;top:51px;width:72px;height:16px;line-height:16px">Pha trộn</div>
<div style="left:797px;top:51px;width:215px;height:16px;background:#444;color:#999;font-size:9px;line-height:16px;padding-left:2px">Bình thường</div>
<div style="left:1002px;top:58px;width:0;height:0;border:3px solid transparent;border-top:3px solid #999;border-bottom:0"></div>
<div class="lab" style="left:720px;top:71px;width:94px;height:15px;padding-left:15px;line-height:15px"><span class="cb"></span>Bảo vệ alpha</div>
<div class="lab" style="left:819px;top:71px;width:94px;height:15px;padding-left:15px;line-height:15px"><span class="cb"></span>Xén bớt</div>
<div class="lab" style="left:917px;top:71px;width:95px;height:15px;padding-left:15px;line-height:15px"><span class="cb"></span>Khóa</div>

<div style="left:718px;top:89px;width:282px;height:299px;background:#2a2a2a"></div>
<div class="lr" style="top:89px"><div style="left:14px;top:0;width:268px;height:29px;background:#4f97d0"></div><span class="ey"></span><span class="th ck"></span><b style="font-weight:bold;color:#fff">Lớp10</b></div>
<svg class="a" style="left:982px;top:96px" width="16" height="16"><use href="#gear"/></svg>
<div class="lr" style="top:119px"><span class="ey"></span><span class="th ck"></span><b>Lớp8</b></div>
<div class="lr" style="top:149px"><span class="ey"></span><span class="th ck"></span><b>Lớp2</b></div>
<div class="lr" style="top:179px"><span class="ey"></span><span class="th ck"></span><b>Lớp2</b></div>
<div class="lr" style="top:209px"><span class="ey"></span><span class="th ck"></span><b>Lớp2</b></div>
<div class="lr" style="top:239px"><span class="ey"></span><span class="th ck"></span><b>Lớp2</b></div>
<div class="lr" style="top:269px"><span class="ey"></span><span class="th ck"></span><b>Lớp2</b></div>
<div class="lr" style="top:299px"><span class="ey"></span><span class="th ck"></span><b>Lớp2</b></div>
<div class="lr" style="top:329px"><span class="ey"></span><span class="th ck"></span><b>Lớp1</b></div>
<div style="left:747px;top:338px;width:8px;height:8px;border:1px solid #9ad6a8;background:#d6f0da"></div>
<div class="lr" style="top:359px"><span class="ey"></span><span class="th ck"></span><b>Lớp9</b></div>
<div style="left:1001px;top:89px;width:14px;height:299px;background:#3c3c3c"></div>
<div style="left:1002px;top:98px;width:12px;height:283px;background:#666;border-radius:5px"></div>
<div style="left:1004px;top:91px;width:0;height:0;border:4px solid transparent;border-bottom:5px solid #aaa;border-top:0"></div>
<div style="left:1004px;top:383px;width:0;height:0;border:4px solid transparent;border-top:5px solid #aaa;border-bottom:0"></div>

<div style="left:717px;top:390px;width:298px;height:23px;background:#252525"></div>
<div class="b" style="left:720px;top:393px;width:17px;height:17px"></div><svg class="a" style="left:720px;top:393px" width="17" height="17"><use href="#doc"/></svg>
<div class="b" style="left:741px;top:393px;width:17px;height:17px"></div><svg class="a" style="left:741px;top:393px" width="17" height="17"><use href="#doc"/></svg><div class="t" style="left:747px;top:396px;font-size:7px;color:#ccc">8</div>
<div class="b" style="left:761px;top:393px;width:17px;height:17px"></div><svg class="a" style="left:761px;top:393px" width="17" height="17"><use href="#doc"/></svg><div class="t" style="left:767px;top:396px;font-size:7px;color:#ccc">1</div>
<div class="b" style="left:781px;top:393px;width:23px;height:17px"></div><svg class="a" style="left:781px;top:393px" width="17" height="17"><use href="#doc"/></svg><div style="left:798px;top:400px;width:0;height:0;border:3px solid transparent;border-top:3px solid #ccc;border-bottom:0"></div>
<div class="b" style="left:807px;top:393px;width:17px;height:17px"></div><svg class="a" style="left:807px;top:393px" width="17" height="17"><use href="#fold"/></svg>
<div class="b" style="left:832px;top:393px;width:17px;height:17px"></div><svg class="a" style="left:832px;top:393px" width="17" height="17"><use href="#copy"/></svg>
<div class="b" style="left:852px;top:393px;width:17px;height:17px"></div><svg class="a" style="left:852px;top:393px" width="17" height="17" viewBox="0 0 17 17"><path d="M3 3h5v4H3zM3 10h5v4H3zM10 6h4v4h-4z" fill="#ccc"/></svg>
<div class="b" style="left:878px;top:393px;width:17px;height:17px"></div><svg class="a" style="left:878px;top:393px" width="17" height="17"><use href="#tr"/></svg>

<!-- status -->
<div class="t" style="left:4px;top:532px;font-size:9.500px;color:#b4b4b4;white-space:pre;transform:scaleX(.94);transform-origin:0 0">5511 * 5511 pixel  (40 * 40cm)  350 dpi  66 %  ( 2670, 3167 )  Di chuyển ngang/vuông góc bằng cách giữ phím Shift</div>
</div></body></html>
